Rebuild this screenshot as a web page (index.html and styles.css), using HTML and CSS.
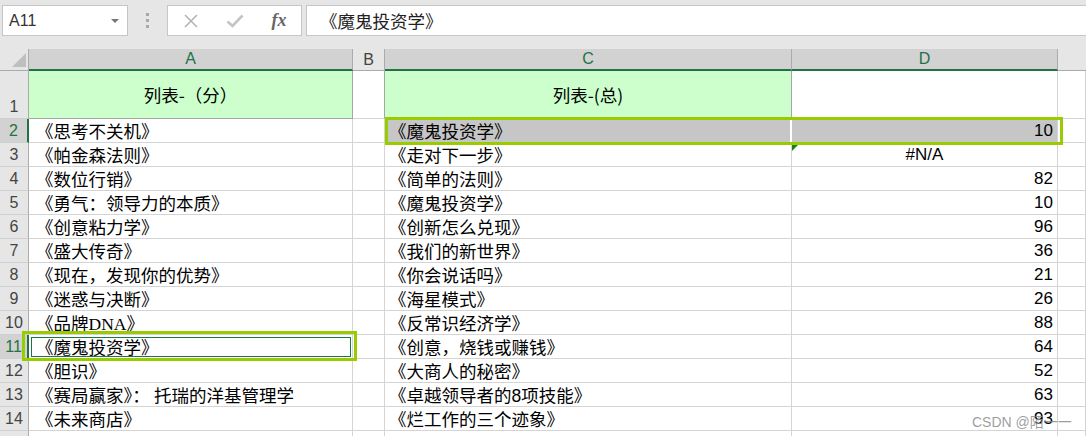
FILE: index.html
```html
<!DOCTYPE html>
<html lang="zh-CN">
<head>
    <meta charset="UTF-8">
    <title>列表</title>
    <link rel="stylesheet" href="styles.css">
</head>
<body>
    <div class="formula-bar">
        <div class="name-box">
            <span>A11</span>
            <span class="caret"></span>
        </div>
        <div class="dots"><span></span><span></span><span></span></div>
        <div class="fx-box">
            <span class="fx-btn">
                <svg width="16" height="16" viewBox="0 0 16 16"><path d="M2 2 L14 14 M14 2 L2 14" stroke="#b4b4b4" stroke-width="1.6" fill="none"/></svg>
            </span>
            <span class="fx-btn">
                <svg width="18" height="16" viewBox="0 0 18 16"><path d="M1.5 8.5 L6.5 13 L16.5 2.5" stroke="#c4c4c4" stroke-width="2.6" fill="none"/></svg>
            </span>
            <span class="fx-btn fx">fx</span>
        </div>
        <div class="formula-input">《魔鬼投资学》</div>
    </div>

    <div class="sheet">
        <div class="corner"><span class="tri"></span></div>
        <div class="col-head sel">A</div>
        <div class="col-head">B</div>
        <div class="col-head sel">C</div>
        <div class="col-head sel">D</div>
        <div class="col-head blank"></div>

        <div class="row-head tall">1</div>
        <div class="cell title">列表-（分）</div>
        <div class="cell b1"></div>
        <div class="cell title">列表-(总)</div>
        <div class="cell d1"></div>
        <div class="cell"></div>

        <div class="row-head sel">2</div>
        <div class="cell a">《思考不关机》</div>
        <div class="cell"></div>
        <div class="cell c picked c2">《魔鬼投资学》</div>
        <div class="cell num picked">10</div>
        <div class="cell"></div>

        <div class="row-head">3</div>
        <div class="cell a">《帕金森法则》</div>
        <div class="cell"></div>
        <div class="cell c">《走对下一步》</div>
        <div class="cell num err">#N/A</div>
        <div class="cell"></div>

        <div class="row-head">4</div>
        <div class="cell a">《数位行销》</div>
        <div class="cell"></div>
        <div class="cell c">《简单的法则》</div>
        <div class="cell num">82</div>
        <div class="cell"></div>

        <div class="row-head">5</div>
        <div class="cell a">《勇气：领导力的本质》</div>
        <div class="cell"></div>
        <div class="cell c">《魔鬼投资学》</div>
        <div class="cell num">10</div>
        <div class="cell"></div>

        <div class="row-head">6</div>
        <div class="cell a">《创意粘力学》</div>
        <div class="cell"></div>
        <div class="cell c">《创新怎么兑现》</div>
        <div class="cell num">96</div>
        <div class="cell"></div>

        <div class="row-head">7</div>
        <div class="cell a">《盛大传奇》</div>
        <div class="cell"></div>
        <div class="cell c">《我们的新世界》</div>
        <div class="cell num">36</div>
        <div class="cell"></div>

        <div class="row-head">8</div>
        <div class="cell a">《现在，发现你的优势》</div>
        <div class="cell"></div>
        <div class="cell c">《你会说话吗》</div>
        <div class="cell num">21</div>
        <div class="cell"></div>

        <div class="row-head">9</div>
        <div class="cell a">《迷惑与决断》</div>
        <div class="cell"></div>
        <div class="cell c">《海星模式》</div>
        <div class="cell num">26</div>
        <div class="cell"></div>

        <div class="row-head">10</div>
        <div class="cell a">《品牌DNA》</div>
        <div class="cell"></div>
        <div class="cell c">《反常识经济学》</div>
        <div class="cell num">88</div>
        <div class="cell"></div>

        <div class="row-head sel">11</div>
        <div class="cell a active">《魔鬼投资学》</div>
        <div class="cell"></div>
        <div class="cell c">《创意，烧钱或赚钱》</div>
        <div class="cell num">64</div>
        <div class="cell"></div>

        <div class="row-head">12</div>
        <div class="cell a">《胆识》</div>
        <div class="cell"></div>
        <div class="cell c">《大商人的秘密》</div>
        <div class="cell num">52</div>
        <div class="cell"></div>

        <div class="row-head">13</div>
        <div class="cell a">《赛局赢家》： 托瑞的洋基管理学</div>
        <div class="cell"></div>
        <div class="cell c">《卓越领导者的8项技能》</div>
        <div class="cell num">63</div>
        <div class="cell"></div>

        <div class="row-head">14</div>
        <div class="cell a">《未来商店》</div>
        <div class="cell"></div>
        <div class="cell c">《烂工作的三个迹象》</div>
        <div class="cell num">93</div>
        <div class="cell"></div>

        <div class="row-head"></div>
        <div class="cell"></div>
        <div class="cell"></div>
        <div class="cell"></div>
        <div class="cell"></div>
        <div class="cell"></div>

        <!-- highlight boxes drawn over the grid -->
        <div class="mark mark-c2"></div>
        <div class="mark mark-a11"></div>
    </div>

    <div class="watermark">CSDN @陌一一</div>
</body>
</html>
```

FILE: styles.css
```css
* {
    margin: 0;
    padding: 0;
    box-sizing: border-box;
}
body {
    background: #e6e6e6;
    font-family: "Liberation Sans", "Noto Sans CJK SC", sans-serif;
    overflow: hidden;
    height: 436px;
    position: relative;
}

/* formula bar */
.formula-bar {
    height: 49px;
    display: flex;
    align-items: flex-start;
    padding: 5px 0 0 2px;
}
.name-box {
    width: 126px;
    height: 31px;
    background: #fff;
    border: 1px solid #c6c6c6;
    display: flex;
    align-items: center;
    justify-content: space-between;
    padding: 0 8px 0 6px;
    font-size: 16px;
    color: #333;
}
.caret {
    width: 0;
    height: 0;
    border-left: 4px solid transparent;
    border-right: 4px solid transparent;
    border-top: 4px solid #777;
}
.dots {
    width: 39px;
    height: 31px;
    display: flex;
    flex-direction: column;
    align-items: center;
    justify-content: center;
    gap: 3px;
}
.dots span {
    width: 3px;
    height: 3px;
    background: #a8a8a8;
}
.fx-box {
    width: 135px;
    height: 31px;
    background: #fff;
    border: 1px solid #c6c6c6;
    display: flex;
    align-items: center;
    padding-left: 1px;
}
.fx-btn {
    width: 44px;
    display: flex;
    justify-content: center;
    align-items: center;
}
.fx {
    font-family: "Liberation Serif", serif;
    font-style: italic;
    font-weight: bold;
    font-size: 18px;
    color: #666;
}
.formula-input {
    flex: 1;
    height: 31px;
    margin-left: 4px;
    background: #fff;
    border: 1px solid #c6c6c6;
    border-right: none;
    padding-left: 13px;
    display: flex;
    align-items: center;
    font-size: 17.5px;
    color: #222;
    font-family: "Noto Sans CJK SC", sans-serif;
}

/* sheet grid */
.sheet {
    position: relative;
    display: grid;
    grid-template-columns: 29px 324px 32px 407px 266px 1fr;
    grid-template-rows: 22px 48px repeat(14, 24px);
    background: #fff;
    font-size: 16px;
}
.corner {
    background: #e6e6e6;
    border-right: 1px solid #ababab;
    border-bottom: 1px solid #ababab;
    display: flex;
    justify-content: flex-end;
    align-items: flex-end;
    padding: 0 2px 3px 0;
}
.tri {
    width: 0;
    height: 0;
    border-left: 14px solid transparent;
    border-bottom: 14px solid #bfbfbf;
}
.col-head {
    background: #e6e6e6;
    border-right: 1px solid #ababab;
    border-bottom: 1px solid #ababab;
    display: flex;
    align-items: center;
    justify-content: center;
    color: #444;
    font-size: 16px;
}
.col-head.sel {
    background: #d2d2d2;
    color: #217346;
    border-bottom: 2px solid #217346;
}
.col-head.blank {
    border-right: none;
}
.row-head {
    background: #e6e6e6;
    border-right: 1px solid #ababab;
    border-bottom: 1px solid #cfcfcf;
    display: flex;
    align-items: center;
    justify-content: center;
    color: #444;
    font-size: 16px;
}
.row-head.tall {
    align-items: flex-end;
    padding-bottom: 2px;
}
.row-head.sel {
    background: #d2d2d2;
    color: #217346;
    border-right: 2px solid #217346;
}
.cell {
    border-right: 1px solid #d4d4d4;
    border-bottom: 1px solid #d4d4d4;
    display: flex;
    align-items: center;
    white-space: nowrap;
    color: #000;
    position: relative;
    font-size: 17.5px;
}
.title {
    background: #ccffcc;
    border-right-color: #a6a6a6;
    border-bottom-color: #a6a6a6;
    justify-content: center;
    font-family: "Noto Sans CJK SC", sans-serif;
}
.b1 {
    border-right-color: #a6a6a6;
}
.a {
    padding-left: 7px;
    font-family: "Liberation Serif", "Noto Sans CJK SC", serif;
}
.c {
    padding-left: 4px;
    font-family: "Liberation Sans", "Noto Sans CJK SC", sans-serif;
}
.num {
    justify-content: flex-end;
    padding-right: 4px;
    font-size: 17px;
}
.err {
    justify-content: center;
    padding-right: 0;
}
.err::before {
    content: "";
    position: absolute;
    left: 0;
    top: 2px;
    border-top: 6px solid #1b7f1b;
    border-right: 6px solid transparent;
}
.picked {
    background: #c6c6c6;
}
.c2 {
    border-right: 2px solid #fff;
}
.active {
    outline: 1px solid #217346;
    outline-offset: -3px;
}

/* yellow-green highlight boxes */
.mark {
    position: absolute;
    border: 3px solid #99cc00;
}
.mark-c2 {
    left: 385px;
    top: 68px;
    width: 678px;
    height: 28px;
}
.mark-a11 {
    left: 22px;
    top: 282px;
    width: 335px;
    height: 30px;
}

.watermark {
    position: absolute;
    left: 972px;
    top: 411px;
    font-size: 14px;
    color: rgba(140, 140, 140, 0.85);
}
```
